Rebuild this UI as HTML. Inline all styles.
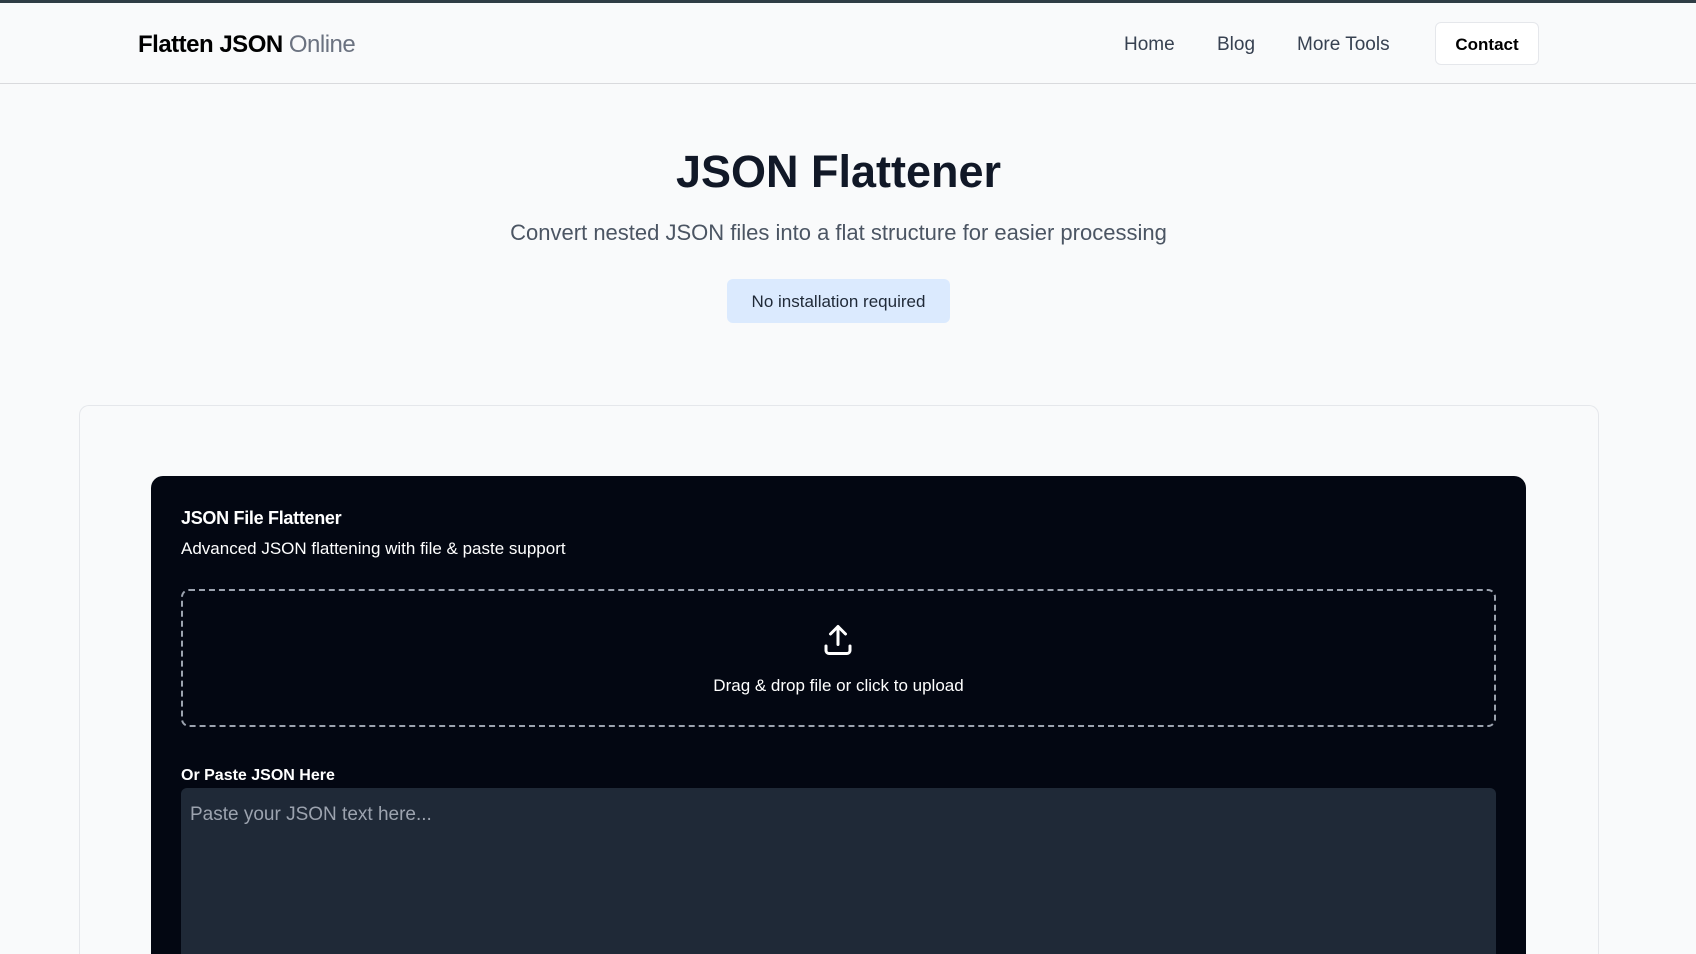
<!DOCTYPE html>
<html style="width:1696px;height:954px;overflow:hidden"><head><meta charset="utf-8"><style>
*{margin:0;padding:0;box-sizing:border-box}
body{width:1696px;height:954px;overflow:hidden;background:#f9fafb;font-family:"Liberation Sans",sans-serif;position:relative;color:#111827}
.a{position:absolute}
</style></head><body>
<div class="a" style="left:0;top:0;width:1696px;height:3px;background:#2f3d45"></div>
<div class="a" style="left:0;top:83px;width:1696px;height:1px;background:#d9dadd"></div>
<div class="a" style="left:138px;top:31px;font-size:24px;font-weight:bold;color:#000;letter-spacing:-0.5px">Flatten JSON <span style="font-weight:normal;color:#6b7280">Online</span></div>
<div class="a" style="left:1124px;top:34px;font-size:19px;color:#374151">Home</div>
<div class="a" style="left:1217px;top:34px;font-size:19px;color:#374151">Blog</div>
<div class="a" style="left:1297px;top:34px;font-size:19px;color:#374151">More Tools</div>
<div class="a" style="left:1435px;top:22px;width:104px;height:43px;background:#fff;border:1px solid #e5e7eb;border-radius:6px;font-size:17px;font-weight:bold;color:#000;text-align:center;line-height:43px">Contact</div>
<div class="a" style="left:0;width:1677px;top:146px;text-align:center;font-size:45px;font-weight:bold;color:#111827">JSON Flattener</div>
<div class="a" style="left:0;width:1677px;top:220px;text-align:center;font-size:22px;color:#4b5563">Convert nested JSON files into a flat structure for easier processing</div>
<div class="a" style="left:727px;top:279px;width:223px;height:44px;background:#dbeafe;border-radius:6px;font-size:17px;color:#1f2937;text-align:center;line-height:46px">No installation required</div>
<div class="a" style="left:79px;top:405px;width:1520px;height:549px;background:#f9fafb;border:1px solid #e5e7eb;border-bottom:none;border-radius:10px 10px 0 0"></div>
<div class="a" style="left:151px;top:476px;width:1375px;height:478px;background:#030712;border-radius:12px 12px 0 0"></div>
<div class="a" style="left:181px;top:508px;font-size:18px;font-weight:bold;color:#fff;letter-spacing:-0.3px">JSON File Flattener</div>
<div class="a" style="left:181px;top:539px;font-size:17px;color:#fff">Advanced JSON flattening with file &amp; paste support</div>
<div class="a" style="left:181px;top:589px;width:1315px;height:138px;border:2px dashed #9ca3af;border-radius:8px"></div>
<svg class="a" style="left:820px;top:622px" width="36" height="36" viewBox="0 0 24 24" fill="none" stroke="#fff" stroke-width="2" stroke-linecap="round" stroke-linejoin="round"><path d="M4 16v3a2 2 0 0 0 2 2h12a2 2 0 0 0 2-2v-3"/><path d="M12 15V3M7 8l5-5 5 5"/></svg>
<div class="a" style="left:0;width:1677px;top:676px;text-align:center;font-size:17px;color:#fff">Drag &amp; drop file or click to upload</div>
<div class="a" style="left:181px;top:767px;font-size:16px;font-weight:bold;color:#fff">Or Paste JSON Here</div>
<div class="a" style="left:181px;top:788px;width:1315px;height:166px;background:#1f2937;border-radius:6px 6px 0 0"></div>
<div class="a" style="left:190px;top:804px;font-size:19px;color:#9ca3af">Paste your JSON text here...</div>
</body></html>
